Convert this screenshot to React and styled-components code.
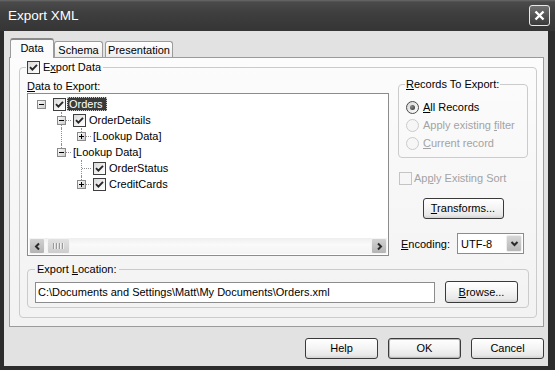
import React from "react";
import styled, { createGlobalStyle } from "styled-components";

const GlobalStyle = createGlobalStyle`
  html, body { margin: 0; padding: 0; background: #2a2a2a; }
  body { font-family: "Liberation Sans", Arial, sans-serif; font-size: 11px; color: #000; }
  *, *::before, *::after { box-sizing: border-box; }
`;

const Window = styled.div`
  width: 555px;
  height: 370px;
  display: flex;
  flex-direction: column;
  background: #2c2c2c;
  overflow: hidden;
`;

const TitleBar = styled.div`
  height: 31px;
  flex: none;
  display: flex;
  align-items: center;
  justify-content: space-between;
  padding: 0 5px 0 8px;
  background: linear-gradient(to bottom, #6a6a6a 0, #4a4a4a 2px, #3f3f3f 40%, #353535 100%);
`;

const Title = styled.div`
  color: #fff;
  font-size: 13.5px;
`;

const CloseButton = styled.div`
  width: 21px;
  height: 21px;
  border: 1px solid #e8e8e8;
  border-radius: 3px;
  background: linear-gradient(#707070, #3a3a3a);
  display: flex;
  align-items: center;
  justify-content: center;
`;

const Client = styled.div`
  flex: 1;
  margin: 0 7px 4px 4px;
  padding: 7px 4px 0 5px;
  background: #e2e2e2;
  display: flex;
  flex-direction: column;
`;

const TabStrip = styled.div`
  height: 19px;
  display: flex;
  align-items: flex-end;
  padding-left: 1px;
  position: relative;
  z-index: 1;
`;

const Tab = styled.div`
  width: ${p => p.$w}px;
  height: ${p => (p.$active ? 20 : 16)}px;
  margin-left: ${p => p.$gap || 0}px;
  margin-bottom: ${p => (p.$active ? -1 : 0)}px;
  border: 1px solid #9b9b9b;
  border-bottom: none;
  border-top: ${p => (p.$active ? "2px solid #8a8a8a" : "1px solid #9b9b9b")};
  border-radius: 3px 3px 0 0;
  background: ${p => (p.$active ? "#fbfbfb" : "linear-gradient(#ffffff, #ececec)")};
  display: flex;
  align-items: center;
  justify-content: center;
  padding-bottom: ${p => (p.$active ? 2 : 0)}px;
`;

const Panel = styled.div`
  height: 270px;
  flex: none;
  border: 1px solid #9b9b9b;
  background: linear-gradient(#fcfcfc, #f2f2f2);
  padding: 2px 6px 8px 9px;
  display: flex;
  flex-direction: column;
`;

const Group = styled.fieldset`
  margin: 0;
  min-width: 0;
  border: 1px solid #cbcbcb;
  border-radius: 4px;
  padding: ${p => p.$pad};
  flex: ${p => (p.$fill ? 1 : "none")};
  display: flex;
  flex-direction: column;
`;

const Legend = styled.legend`
  padding: ${p => p.$pad || "0 2px"};
  margin-left: ${p => p.$shift || 0}px;
  line-height: 13px;
  height: ${p => p.$h || 13}px;
  display: flex;
  align-items: center;
  gap: 3px;
  color: #000;
`;

const Key = styled.span`
  text-decoration: underline;
`;

const TopArea = styled.div`
  display: grid;
  grid-template-columns: 362px 130px;
  column-gap: 9px;
  align-items: start;
`;

const Column = styled.div`
  display: flex;
  flex-direction: column;
`;

const FieldLabel = styled.div`
  margin-top: 2px;
  height: 13px;
  line-height: 13px;
`;

const TreeBox = styled.div`
  height: 163px;
  border: 1px solid #8c8c8c;
  background: #fff;
  padding: 1px;
  display: flex;
  flex-direction: column;
`;

const TreeList = styled.div`
  flex: 1;
  padding: 1px 0 0 2px;
`;

const TreeRow = styled.div`
  height: 16px;
  display: flex;
  align-items: center;
`;

const Guide = styled.div`
  position: relative;
  width: 20px;
  height: 16px;
  flex: none;
  padding: 4px 0 0 6px;
  &::before {
    content: "";
    display: ${p => (p.$up || p.$down ? "block" : "none")};
    position: absolute;
    left: 10px;
    top: ${p => (p.$up ? 0 : 8)}px;
    bottom: ${p => (p.$down ? 0 : 8)}px;
    border-left: 1px dotted #8f8f8f;
  }
  &::after {
    content: "";
    display: ${p => (p.$right ? "block" : "none")};
    position: absolute;
    left: 11px;
    right: 0;
    top: 8px;
    border-top: 1px dotted #8f8f8f;
  }
`;

const ExpanderBox = styled.svg`
  display: block;
  position: relative;
  z-index: 1;
`;

const ItemLabel = styled.span`
  margin-left: ${p => p.$indent}px;
  padding: 0 3px 0 1px;
  height: 14px;
  line-height: 12px;
  border: 1px ${p => (p.$selected ? "dotted #c8c8c8" : "solid transparent")};
  background: ${p => (p.$selected ? "#3a3a3a" : "transparent")};
  color: ${p => (p.$selected ? "#fff" : "#000")};
  white-space: nowrap;
`;

const CheckBox = styled.span`
  width: 13px;
  height: 13px;
  flex: none;
  margin-left: ${p => p.$indent || 0}px;
  border: 1px solid ${p => (p.$disabled ? "#c4c4c4" : "#3e3e3e")};
  background: ${p => (p.$disabled ? "#f6f6f6" : "linear-gradient(135deg, #d8d8d8, #f6f6f6 70%, #ffffff)")};
  display: flex;
  align-items: center;
  justify-content: center;
`;

const Radio = styled.span`
  width: 13px;
  height: 13px;
  flex: none;
  border-radius: 50%;
  border: 1px solid ${p => (p.$disabled ? "#cbcbcb" : "#4a4a4a")};
  background: ${p => (p.$disabled ? "#f6f6f6" : "linear-gradient(135deg, #d6d6d6, #ffffff)")};
  display: flex;
  align-items: center;
  justify-content: center;
`;

const RadioDot = styled.span`
  width: 5px;
  height: 5px;
  border-radius: 50%;
  background: radial-gradient(circle at 35% 35%, #8a8a8a, #2e2e2e);
`;

const OptionRow = styled.div`
  height: ${p => p.$h || 18}px;
  display: flex;
  align-items: center;
  gap: ${p => p.$gap || 4}px;
  padding-left: ${p => p.$inset || 0}px;
  margin-top: ${p => p.$top || 0}px;
  color: ${p => (p.$disabled ? "#a3a3a3" : "#000")};
`;

const ScrollBar = styled.div`
  height: 16px;
  flex: none;
  display: flex;
  align-items: stretch;
  background: linear-gradient(#eeeeee, #fafafa 40%, #f4f4f4);
`;

const ScrollButton = styled.div`
  width: 16px;
  margin-left: ${p => (p.$end ? "auto" : "0")};
  border: 1px solid #f4f4f4;
  border-radius: 2px;
  background: linear-gradient(#d2d2d2, #b4b4b4);
  display: flex;
  align-items: center;
  justify-content: center;
`;

const ScrollThumb = styled.div`
  width: 23px;
  margin-left: 2px;
  border: 1px solid #f4f4f4;
  border-radius: 2px;
  background: linear-gradient(#e2e2e2, #cdcdcd);
  display: flex;
  align-items: center;
  justify-content: center;
  gap: 1px;
`;

const Grip = styled.span`
  width: 1px;
  height: 6px;
  background: #9a9a9a;
  box-shadow: 1px 0 0 #f0f0f0;
  margin-right: 1px;
`;

const Button = styled.div`
  width: ${p => p.$w || 73}px;
  height: ${p => p.$h || 21}px;
  flex: none;
  align-self: ${p => p.$center ? "center" : "auto"};
  margin-top: ${p => p.$top || 0}px;
  border: 1px solid #3a3a3a;
  border-radius: 3px;
  background: linear-gradient(#ffffff 0%, #f5f5f5 45%, #e8e8e8 85%, #d2d2d2 100%);
  box-shadow: ${p => (p.$default ? "inset 0 0 0 1px #b8b8b8" : "none")};
  display: flex;
  align-items: center;
  justify-content: center;
  padding-bottom: 1px;
`;

const EncodingRow = styled.div`
  margin-top: 14px;
  height: 21px;
  display: flex;
  align-items: center;
  padding: 0 4px 0 3px;
`;

const Select = styled.div`
  width: 67px;
  height: 21px;
  margin-left: auto;
  border: 1px solid #8c8c8c;
  background: #fff;
  padding: 1px;
  display: flex;
  align-items: center;
`;

const SelectValue = styled.span`
  flex: 1;
  padding-left: 2px;
`;

const DropButton = styled.div`
  width: 16px;
  height: 17px;
  border: 1px solid #eeeeee;
  border-radius: 2px;
  background: linear-gradient(#d6d6d6, #b8b8b8);
  display: flex;
  align-items: center;
  justify-content: center;
`;

const LocationRow = styled.div`
  display: flex;
  align-items: center;
  gap: 10px;
`;

const PathInput = styled.input`
  width: 400px;
  height: 21px;
  margin: 0;
  border: 1px solid #8c8c8c;
  background: #fff;
  padding: 0 2px 1px;
  font-family: "Liberation Sans", Arial, sans-serif;
  font-size: 11px;
  color: #000;
  outline: none;
`;

const DialogButtons = styled.div`
  margin-top: 11px;
  display: flex;
  justify-content: flex-end;
  gap: 10px;
`;

const Check = () => (
  <svg width="9" height="9" viewBox="0 0 9 9">
    <path d="M1 4.2 L3.4 6.6 L8 1.8" fill="none" stroke="#262626" strokeWidth="1.9" />
  </svg>
);

const Expander = ({ open }) => (
  <ExpanderBox width="9" height="9" viewBox="0 0 9 9" shapeRendering="crispEdges">
    <defs>
      <linearGradient id="exp" x1="0" y1="0" x2="1" y2="1">
        <stop offset="0" stopColor="#ffffff" />
        <stop offset="1" stopColor="#c9c9c9" />
      </linearGradient>
    </defs>
    <rect x="0.5" y="0.5" width="8" height="8" fill="url(#exp)" stroke="#8a8a8a" />
    <path d="M2 4.5 H7" stroke="#000" />
    {!open && <path d="M4.5 2 V7" stroke="#000" />}
  </ExpanderBox>
);

const Chevron = ({ dir }) => {
  const d = dir === "left" ? "M6 1.5 L3 4.5 L6 7.5" : dir === "right" ? "M3 1.5 L6 4.5 L3 7.5" : "M1.5 3 L4.5 6 L7.5 3";
  return (
    <svg width="9" height="9" viewBox="0 0 9 9">
      <path d={d} fill="none" stroke="#2a2a2a" strokeWidth="2" />
    </svg>
  );
};

const tree = [
  { guides: [{ exp: "minus" }], check: true, label: "Orders", selected: true },
  { guides: [{}, { up: 1, down: 1, right: 1, exp: "minus" }], check: true, label: "OrderDetails" },
  { guides: [{}, { up: 1, down: 1 }, { up: 1, right: 1, exp: "plus" }], label: "[Lookup Data]" },
  { guides: [{}, { up: 1, right: 1, exp: "minus" }], label: "[Lookup Data]" },
  { guides: [{}, {}, { up: 1, down: 1, right: 1 }], check: true, label: "OrderStatus" },
  { guides: [{}, {}, { up: 1, right: 1, exp: "plus" }], check: true, label: "CreditCards" },
];

const Tree = () => (
  <TreeBox>
    <TreeList>
      {tree.map((row, i) => (
        <TreeRow key={i}>
          {row.guides.map((g, j) => (
            <Guide key={j} $up={g.up} $down={g.down} $right={g.right}>
              {g.exp && <Expander open={g.exp === "minus"} />}
            </Guide>
          ))}
          {row.check && (
            <CheckBox $indent={2}>
              <Check />
            </CheckBox>
          )}
          <ItemLabel $indent={row.check ? 1 : 0} $selected={row.selected}>
            {row.label}
          </ItemLabel>
        </TreeRow>
      ))}
    </TreeList>
    <ScrollBar>
      <ScrollButton>
        <Chevron dir="left" />
      </ScrollButton>
      <ScrollThumb>
        <Grip />
        <Grip />
        <Grip />
        <Grip />
      </ScrollThumb>
      <ScrollButton $end>
        <Chevron dir="right" />
      </ScrollButton>
    </ScrollBar>
  </TreeBox>
);

export default function App() {
  return (
    <>
      <GlobalStyle />
      <Window>
        <TitleBar>
          <Title>Export XML</Title>
          <CloseButton>
            <svg width="13" height="13" viewBox="0 0 13 13">
              <path d="M2.5 2.5 L10.5 10.5 M10.5 2.5 L2.5 10.5" stroke="#fff" strokeWidth="2.4" />
            </svg>
          </CloseButton>
        </TitleBar>
        <Client>
          <TabStrip>
            <Tab $active $w={44}>Data</Tab>
            <Tab $w={49}>Schema</Tab>
            <Tab $w={68} $gap={2}>Presentation</Tab>
          </TabStrip>
          <Panel>
            <Group $fill $pad="4px 7px 7px 7px">
              <Legend $h={14} $pad="0 2px 0 1px" $shift={-1}>
                <CheckBox>
                  <Check />
                </CheckBox>
                <span>
                  E<Key>x</Key>port Data
                </span>
              </Legend>
              <TopArea>
                <Column>
                  <FieldLabel>
                    <Key>D</Key>ata to Export:
                  </FieldLabel>
                  <Tree />
                </Column>
                <Column>
                  <Group $pad="7px 4px 5px 7px">
                    <Legend $pad="0 1px" $shift={-1}>
                      <span>
                        <Key>R</Key>ecords To Export:
                      </span>
                    </Legend>
                    <OptionRow>
                      <Radio>
                        <RadioDot />
                      </Radio>
                      <span>
                        <Key>A</Key>ll Records
                      </span>
                    </OptionRow>
                    <OptionRow $disabled>
                      <Radio $disabled />
                      <span>
                        Apply existing <Key>f</Key>ilter
                      </span>
                    </OptionRow>
                    <OptionRow $disabled>
                      <Radio $disabled />
                      <span>
                        <Key>C</Key>urrent record
                      </span>
                    </OptionRow>
                  </Group>
                  <OptionRow $disabled $h={14} $top={13} $gap={2} $inset={1}>
                    <CheckBox $disabled />
                    <span>
                      Ap<Key>p</Key>ly Existing Sort
                    </span>
                  </OptionRow>
                  <Button $w={81} $center $top={13}>
                    <span>
                      <Key>T</Key>ransforms...
                    </span>
                  </Button>
                  <EncodingRow>
                    <span>
                      <Key>E</Key>ncoding:
                    </span>
                    <Select>
                      <SelectValue>UTF-8</SelectValue>
                      <DropButton>
                        <Chevron dir="down" />
                      </DropButton>
                    </Select>
                  </EncodingRow>
                </Column>
              </TopArea>
              <Group $pad="5px 9px 4px 7px" style={{ marginTop: 7 }}>
                <Legend>
                  <span>
                    Export <Key>L</Key>ocation:
                  </span>
                </Legend>
                <LocationRow>
                  <PathInput readOnly value="C:\Documents and Settings\Matt\My Documents\Orders.xml" />
                  <Button $h={22}>
                    <span>
                      <Key>B</Key>rowse...
                    </span>
                  </Button>
                </LocationRow>
              </Group>
            </Group>
          </Panel>
          <DialogButtons>
            <Button>Help</Button>
            <Button $default>OK</Button>
            <Button>Cancel</Button>
          </DialogButtons>
        </Client>
      </Window>
    </>
  );
}
